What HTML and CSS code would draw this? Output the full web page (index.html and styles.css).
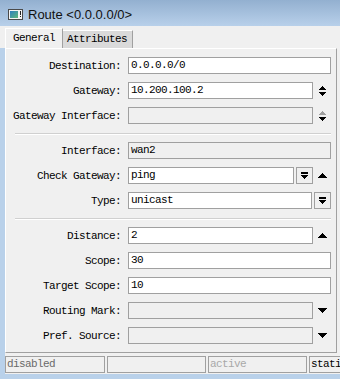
FILE: index.html
```html
<!DOCTYPE html>
<html lang="en">
<head>
    <meta charset="UTF-8">
    <title>Route &lt;0.0.0.0/0&gt;</title>
    <link rel="stylesheet" href="styles.css">
</head>
<body>

    <div class="window">
        <!-- Title bar -->
        <div class="titlebar">
            <svg class="app-icon" width="15" height="11" viewBox="0 0 15 11">
                <defs>
                    <linearGradient id="scr" x1="0" y1="0" x2="1" y2="1">
                        <stop offset="0" stop-color="#2d7fc0"/>
                        <stop offset="1" stop-color="#5fb87a"/>
                    </linearGradient>
                </defs>
                <rect x="0.5" y="0.5" width="14" height="10" fill="#f4f4f4" stroke="#4a4a4a"/>
                <rect x="2" y="2" width="8" height="7" fill="url(#scr)"/>
                <rect x="12" y="2" width="1" height="4" fill="#222"/>
                <rect x="12" y="7" width="1" height="1" fill="#222"/>
            </svg>
            <span class="title">Route &lt;0.0.0.0/0&gt;</span>
        </div>

        <!-- Tabs -->
        <div class="tabs">
            <div class="tab active">General</div>
            <div class="tab other">Attributes</div>
        </div>

        <div class="frame">
            <div class="client">
                <div class="panel">

                    <div class="section">
                        <div class="row">
                            <span class="label">Destination:</span>
                            <div class="field">0.0.0.0/0</div>
                        </div>
                        <div class="row">
                            <span class="label">Gateway:</span>
                            <div class="field">10.200.100.2</div>
                            <div class="slot">
                                <svg width="9" height="10" viewBox="0 0 9 10" shape-rendering="crispEdges">
                                    <polygon points="0,4 4.5,0 9,4" fill="#000"/>
                                    <polygon points="0,6 9,6 4.5,10" fill="#000"/>
                                </svg>
                            </div>
                        </div>
                        <div class="row">
                            <span class="label">Gateway Interface:</span>
                            <div class="field off"></div>
                            <div class="slot">
                                <svg width="9" height="10" viewBox="0 0 9 10" shape-rendering="crispEdges">
                                    <polygon points="0,4 4.5,0 9,4" fill="#a0a0a0"/>
                                    <polygon points="0,6 9,6 4.5,10" fill="#000"/>
                                </svg>
                            </div>
                        </div>
                    </div>

                    <div class="sep"></div>

                    <div class="section">
                        <div class="row">
                            <span class="label">Interface:</span>
                            <div class="field off">wan2</div>
                        </div>
                        <div class="row">
                            <span class="label">Check Gateway:</span>
                            <div class="field">ping</div>
                            <div class="btn">
                                <svg width="7" height="7" viewBox="0 0 7 7" shape-rendering="crispEdges">
                                    <rect x="0" y="0" width="7" height="2" fill="#000"/>
                                    <polygon points="0,3 7,3 3.5,7" fill="#000"/>
                                </svg>
                            </div>
                            <div class="slot">
                                <svg width="9" height="5" viewBox="0 0 9 5" shape-rendering="crispEdges">
                                    <polygon points="0,5 4.5,0 9,5" fill="#000"/>
                                </svg>
                            </div>
                        </div>
                        <div class="row">
                            <span class="label">Type:</span>
                            <div class="field">unicast</div>
                            <div class="btn">
                                <svg width="7" height="7" viewBox="0 0 7 7" shape-rendering="crispEdges">
                                    <rect x="0" y="0" width="7" height="2" fill="#000"/>
                                    <polygon points="0,3 7,3 3.5,7" fill="#000"/>
                                </svg>
                            </div>
                        </div>
                    </div>

                    <div class="sep"></div>

                    <div class="section">
                        <div class="row">
                            <span class="label">Distance:</span>
                            <div class="field">2</div>
                            <div class="slot">
                                <svg width="9" height="5" viewBox="0 0 9 5" shape-rendering="crispEdges">
                                    <polygon points="0,5 4.5,0 9,5" fill="#000"/>
                                </svg>
                            </div>
                        </div>
                        <div class="row">
                            <span class="label">Scope:</span>
                            <div class="field">30</div>
                        </div>
                        <div class="row">
                            <span class="label">Target Scope:</span>
                            <div class="field">10</div>
                        </div>
                        <div class="row">
                            <span class="label">Routing Mark:</span>
                            <div class="field off"></div>
                            <div class="slot">
                                <svg width="9" height="5" viewBox="0 0 9 5" shape-rendering="crispEdges">
                                    <polygon points="0,0 9,0 4.5,5" fill="#000"/>
                                </svg>
                            </div>
                        </div>
                        <div class="row">
                            <span class="label">Pref. Source:</span>
                            <div class="field off"></div>
                            <div class="slot">
                                <svg width="9" height="5" viewBox="0 0 9 5" shape-rendering="crispEdges">
                                    <polygon points="0,0 9,0 4.5,5" fill="#000"/>
                                </svg>
                            </div>
                        </div>
                    </div>

                </div>

                <!-- Status bar -->
                <div class="statusbar">
                    <div class="cell c1 dim">disabled</div>
                    <div class="cell c2"></div>
                    <div class="cell c3 faint">active</div>
                    <div class="cell c4">static</div>
                </div>
            </div>
        </div>
    </div>

</body>
</html>
```

FILE: styles.css
```css
* {
    box-sizing: border-box;
}

body {
    margin: 0;
    width: 340px;
    height: 379px;
    overflow: hidden;
    background: #b9d1ea;
    font-family: "Liberation Mono", "DejaVu Sans Mono", monospace;
    font-size: 11px;
    letter-spacing: -0.6px;
    color: #000;
}

.window {
    display: flex;
    flex-direction: column;
    width: 340px;
}

/* title bar */
.titlebar {
    height: 26px;
    background: linear-gradient(#93b0d0, #b8d0ea);
    display: flex;
    align-items: center;
    padding: 2px 0 0 8px;
    gap: 5px;
}

.title {
    font-family: "Liberation Sans", Arial, sans-serif;
    font-size: 13px;
    letter-spacing: 0;
    color: #111;
}

/* tabs */
.tabs {
    height: 22px;
    background: #f0f0f0;
    display: flex;
    align-items: flex-end;
    padding-left: 5px;
}

.tab {
    height: 18px;
    line-height: 16px;
    border: 1px solid #a0a0a0;
    border-top-color: #fff;
    border-left-color: #fff;
    border-bottom: 0;
    white-space: nowrap;
}

.tab.active {
    width: 58px;
    height: 20px;
    line-height: 18px;
    padding-left: 7px;
    background: #f0f0f0;
}

.tab.other {
    width: 70px;
    padding-left: 4px;
    background: #dadada;
    border-left: 0;
}

/* window body */
.frame {
    display: flex;
    height: 326px;
    padding-left: 5px;
}

.client {
    flex: 1;
    background: #f0f0f0;
    overflow: hidden;
}

.panel {
    width: 332px;
    height: 305px;
    border: 1px solid #a0a0a0;
    border-top-color: #fff;
    border-left-color: #fff;
    padding: 8px 5px 8px 0;
}

.section {
    display: flex;
    flex-direction: column;
    gap: 8px;
}

.sep {
    margin: 9px 0 7px 9px;
    border-top: 1px solid #d0d0d0;
    border-bottom: 1px solid #fff;
}

.row {
    display: flex;
    align-items: center;
    height: 17px;
}

.label {
    width: 115px;
    margin-right: 7px;
    text-align: right;
    white-space: nowrap;
}

.field {
    flex: 1;
    height: 17px;
    border: 1px solid #a0a0a0;
    background: #fff;
    padding-left: 2px;
    line-height: 15px;
    white-space: nowrap;
    overflow: hidden;
}

.field.off {
    background: #f0f0f0;
}

.slot {
    width: 18px;
    height: 17px;
    display: flex;
    justify-content: center;
    align-items: center;
}

.btn {
    width: 17px;
    height: 17px;
    margin-left: 2px;
    border: 1px solid #a0a0a0;
    background: #f0f0f0;
    display: flex;
    justify-content: center;
    align-items: center;
}

/* status bar */
.statusbar {
    display: flex;
    gap: 2px;
    height: 17px;
    margin-top: 3px;
}

.cell {
    flex-shrink: 0;
    border: 1px solid #a0a0a0;
    padding-left: 1px;
    line-height: 15px;
    white-space: nowrap;
    overflow: hidden;
}

.c1 { width: 100px; }
.c2 { width: 99px; }
.c3 { width: 99px; }
.c4 { width: 60px; }

.dim {
    color: #6a6a6a;
}

.faint {
    color: #a8a8a8;
}
```
